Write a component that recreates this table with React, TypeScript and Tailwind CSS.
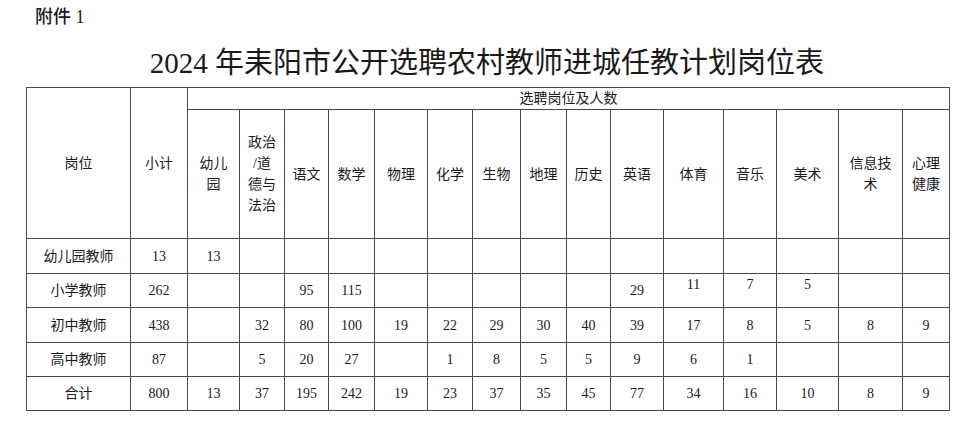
import React from 'react';

const FONT = '"Liberation Serif", "Noto Sans CJK SC", serif';

// column widths in px, left to right
const COLS = [104, 57, 52, 45, 44, 46, 53, 45, 48, 46, 44, 53, 60, 53, 62, 64, 47];

const SUBJECTS: React.ReactNode[] = [
    <>幼儿<br />园</>,
    <>政治<br />/道<br />德与<br />法治</>,
    '语文',
    '数学',
    '物理',
    '化学',
    '生物',
    '地理',
    '历史',
    '英语',
    '体育',
    '音乐',
    '美术',
    <>信息技<br />术</>,
    <>心理<br />健康</>,
];

type Row = { name: string; total: string; values: string[]; raised?: number[]; h: string };

const ROWS: Row[] = [
    { name: '幼儿园教师', total: '13', values: ['13', '', '', '', '', '', '', '', '', '', '', '', '', '', ''], h: 'h-[35px]' },
    { name: '小学教师', total: '262', values: ['', '', '95', '115', '', '', '', '', '', '29', '11', '7', '5', '', ''], raised: [10, 11, 12], h: 'h-[34px]' },
    { name: '初中教师', total: '438', values: ['', '32', '80', '100', '19', '22', '29', '30', '40', '39', '17', '8', '5', '8', '9'], h: 'h-[35px]' },
    { name: '高中教师', total: '87', values: ['', '5', '20', '27', '', '1', '8', '5', '5', '9', '6', '1', '', '', ''], h: 'h-[34px]' },
    { name: '合计', total: '800', values: ['13', '37', '195', '242', '19', '23', '37', '35', '45', '77', '34', '16', '10', '8', '9'], h: 'h-[34px]' },
];

const cell = 'border border-[#4a4a4a] text-center align-middle p-0';

export default function App() {
    return (
        <div className="min-h-screen w-[974px] bg-white text-[#1a1a1a]" style={{ fontFamily: FONT }}>
            {/* Attachment label */}
            <div className="h-[34px] flex items-center pl-[35px] text-[18px] font-medium">
                附件 1
            </div>

            {/* Title */}
            <div className="pt-[12px] h-[46px] text-center text-[29px] leading-[34px]">
                2024 年耒阳市公开选聘农村教师进城任教计划岗位表
            </div>

            {/* Table */}
            <table className="mt-[7px] ml-[26px] w-[923px] table-fixed border-collapse border border-[#4a4a4a] text-[14px]">
                <colgroup>
                    {COLS.map((w, i) => (
                        <col key={i} style={{ width: w }} />
                    ))}
                </colgroup>
                <thead>
                    <tr className="h-[22px]">
                        <th rowSpan={2} className={`${cell} font-normal`}>岗位</th>
                        <th rowSpan={2} className={`${cell} font-normal`}>小计</th>
                        <th colSpan={15} className={`${cell} font-normal leading-[20px]`}>选聘岗位及人数</th>
                    </tr>
                    <tr className="h-[129px]">
                        {SUBJECTS.map((s, i) => (
                            <th key={i} className={`${cell} font-normal leading-[21px]`}>
                                {s}
                            </th>
                        ))}
                    </tr>
                </thead>
                <tbody>
                    {ROWS.map((r) => (
                        <tr key={r.name} className={r.h}>
                            <td className={cell}>{r.name}</td>
                            <td className={cell}>{r.total}</td>
                            {r.values.map((v, i) => (
                                <td
                                    key={i}
                                    className={`${cell} ${r.raised?.includes(i) ? 'pb-[12px]' : ''}`}
                                >
                                    {v}
                                </td>
                            ))}
                        </tr>
                    ))}
                </tbody>
            </table>
        </div>
    );
}
